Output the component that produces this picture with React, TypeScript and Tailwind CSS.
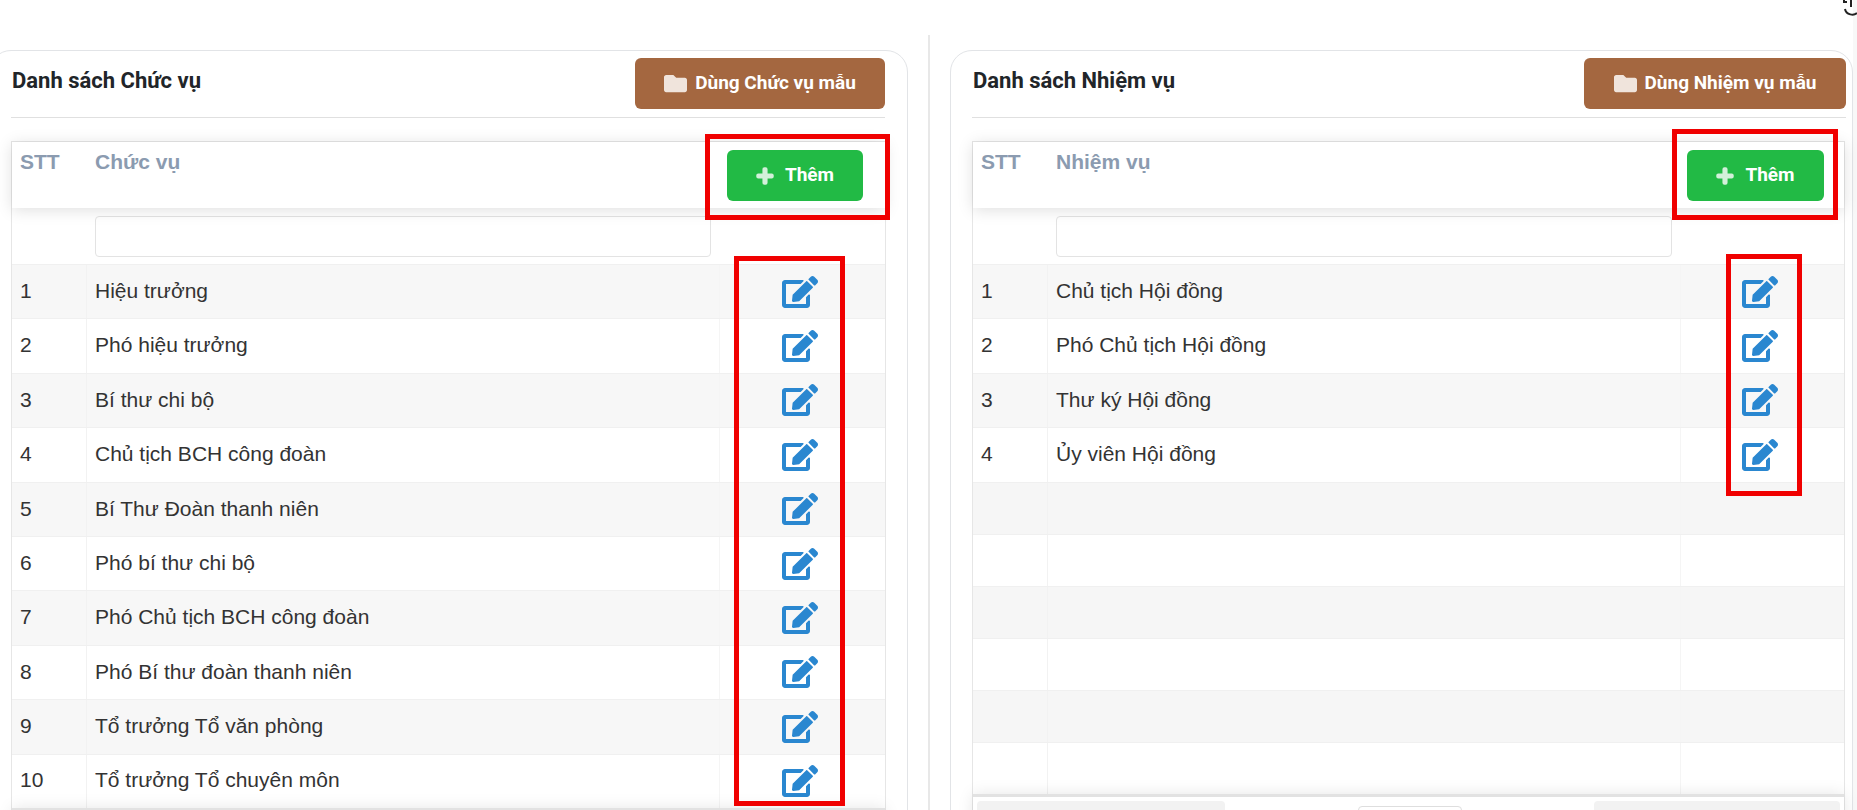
import { FaEdit, FaFolder, FaPlus } from "react-icons/fa";

const chucVu = [
  "Hiệu trưởng",
  "Phó hiệu trưởng",
  "Bí thư chi bộ",
  "Chủ tịch BCH công đoàn",
  "Bí Thư Đoàn thanh niên",
  "Phó bí thư chi bộ",
  "Phó Chủ tịch BCH công đoàn",
  "Phó Bí thư đoàn thanh niên",
  "Tổ trưởng Tổ văn phòng",
  "Tổ trưởng Tổ chuyên môn",
];

const nhiemVu = ["Chủ tịch Hội đồng", "Phó Chủ tịch Hội đồng", "Thư ký Hội đồng", "Ủy viên Hội đồng"];

type PanelProps = {
  title: string;
  column: string;
  items: string[];
  emptyRows: number;
  sampleLabel: string;
  cardClass: string;
  buttonClass: string;
  tableClass: string;
  actionClass: string;
  addClass: string;
};

function Panel({ title, column, items, emptyRows, sampleLabel, cardClass, buttonClass, tableClass, actionClass, addClass }: PanelProps) {
  return (
    <section className={`shrink-0 mt-[50px] h-[800px] rounded-[22px] border border-[#e2e4e7] bg-white ${cardClass}`}>
      <div className="flex h-[67px] items-start justify-between border-b border-[#e0e0e0] pt-[7px] font-['Roboto',sans-serif]">
        <h2 className="pl-px pt-[8px] text-[22px] font-bold leading-[30px] text-[#212529]">{title}</h2>
        <button className={`flex h-[51px] items-center justify-center gap-2 rounded-[6px] bg-[#a46740] text-[19px] font-bold text-white ${buttonClass}`}>
          <FaFolder className="text-[23px] text-[#f0e4dc]" />
          {sampleLabel}
        </button>
      </div>

      <div className={`mt-[23px] border border-[#e6e6e6] font-['Liberation_Sans',Arial,sans-serif] text-[21px] text-[#333] ${tableClass}`}>
        <div className="relative z-10 flex h-[66px] bg-white shadow-[0_2px_15px_0_rgba(0,0,0,0.13)]">
          <div className="w-[75px] shrink-0 pl-2 pt-[7px] font-bold leading-[26px] text-[#8b9bb0]">STT</div>
          <div className="flex-1 pl-2 pt-[7px] font-bold leading-[26px] text-[#8b9bb0]">{column}</div>
          <div className={`flex shrink-0 items-start ${actionClass}`}>
            <button className={`mt-[8px] flex h-[51px] items-center justify-center gap-[11px] rounded-[6px] bg-[#22ba45] font-['Roboto',sans-serif] text-[19px] font-bold text-white ${addClass}`}>
              <FaPlus className="stroke-[50px] text-[18px] text-[#d3f0da]" />
              Thêm
            </button>
          </div>
        </div>

        <div className="flex h-[56px]">
          <div className="w-[75px] shrink-0" />
          <div className="flex-1 pl-2 pr-2 pt-[8px]">
            <input className="block h-[41px] w-full rounded-[4px] border border-[#e3e3e3] bg-white" aria-label={column} />
          </div>
          <div className={`shrink-0 ${actionClass}`} />
        </div>

        {items.map((item, index) => (
          <div key={item} className={`flex h-[54.4px] border-t border-[#f0f0f0] ${index % 2 === 0 ? "bg-[#f7f7f7]" : "bg-white"}`}>
            <div className="flex w-[75px] shrink-0 items-center border-r border-[#f2f2f2] pb-[2px] pl-2">{index + 1}</div>
            <div className="flex flex-1 items-center pb-[2px] pl-2">{item}</div>
            <div className={`flex shrink-0 items-center justify-center border-l border-[#f5f5f5] pr-[5px] ${actionClass}`}>
              <FaEdit className="text-[36px] text-[#2a87d0]" />
            </div>
          </div>
        ))}

        {Array.from({ length: emptyRows }, (_, i) => (
          <div key={i} className={`flex h-[52px] border-t border-[#f0f0f0] ${i % 2 === 0 ? "bg-[#f6f6f6]" : "bg-white"}`}>
            <div className="w-[75px] shrink-0 border-r border-[#f2f2f2]" />
            <div className="flex-1" />
            <div className={`shrink-0 border-l border-[#f5f5f5] ${actionClass}`} />
          </div>
        ))}

        <div className="relative z-10 flex h-[60px] justify-between border-t-[3px] border-[#e2e2e2] bg-white p-[4px] shadow-[0_0_15px_0_rgba(0,0,0,0.1)]">
          <div className="h-[44px] w-[248px] rounded-[4px] bg-[#f2f2f2]" />
          <div className="mt-[5px] h-[36px] w-[104px] rounded-[4px] border border-[#dedede] bg-white" />
          <div className="h-[44px] w-[246px] rounded-[4px] bg-[#f2f2f2]" />
        </div>
      </div>
    </section>
  );
}

export default function App() {
  return (
    <div className="relative flex h-[810px] w-[1857px] overflow-hidden bg-white">
      <Panel
        title="Danh sách Chức vụ"
        column="Chức vụ"
        items={chucVu}
        emptyRows={0}
        sampleLabel="Dùng Chức vụ mẫu"
        cardClass="ml-[-11px] w-[919px] pl-[21px] pr-[22px]"
        buttonClass="w-[250px]"
        tableClass="w-[875px]"
        actionClass="w-[166px]"
        addClass="ml-[8px] w-[136px]"
      />
      <div className="ml-[20px] mt-[35px] h-[775px] w-[2px] shrink-0 bg-[#e8e8e8]" />
      <Panel
        title="Danh sách Nhiệm vụ"
        column="Nhiệm vụ"
        items={nhiemVu}
        emptyRows={6}
        sampleLabel="Dùng Nhiệm vụ mẫu"
        cardClass="ml-[20px] w-[903px] pl-[21px] pr-[6px]"
        buttonClass="w-[262px]"
        tableClass="w-[873px]"
        actionClass="w-[164px]"
        addClass="ml-[7px] w-[137px]"
      />
      <div className="flex-1 bg-[#f8f8f8]" />

      {/* red annotation boxes drawn over the screenshot */}
      <div className="absolute left-[705px] top-[134px] z-20 h-[86px] w-[185px] border-[5px] border-[#f00000]" />
      <div className="absolute left-[734px] top-[256px] z-20 h-[550px] w-[111px] border-[5px] border-[#f00000]" />
      <div className="absolute left-[1672px] top-[129px] z-20 h-[91px] w-[166px] border-[5px] border-[#f00000]" />
      <div className="absolute left-[1726px] top-[254px] z-20 h-[242px] w-[76px] border-[5px] border-[#f00000]" />

      <svg className="absolute right-0 top-0 z-20 h-[17px] w-[14px]" viewBox="0 0 14 17" fill="none" stroke="#222" strokeWidth="2">
        <path d="M1 0v2h3M8 0v7M2 9c1 6 9 7 12 4" />
      </svg>
    </div>
  );
}
